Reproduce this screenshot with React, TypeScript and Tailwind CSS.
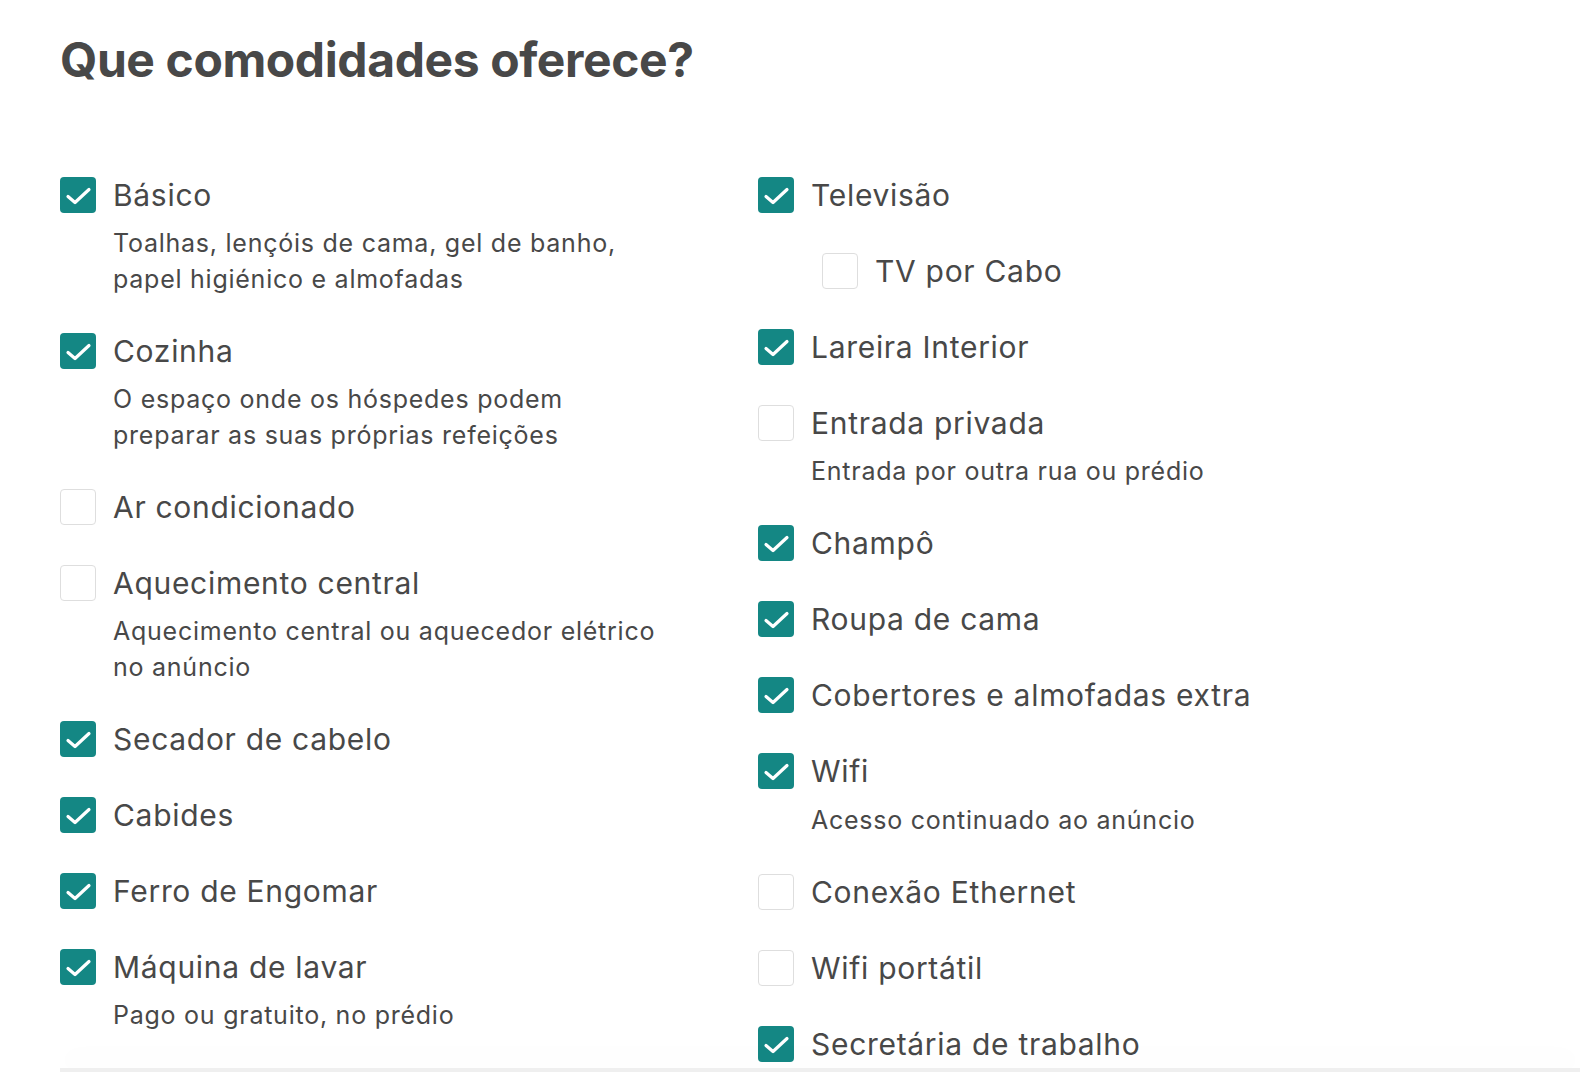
type Item = {
  label: string;
  checked: boolean;
  desc?: string[];
  nested?: boolean;
};

const left: Item[] = [
  { label: "Básico", checked: true, desc: ["Toalhas, lençóis de cama, gel de banho,", "papel higiénico e almofadas"] },
  { label: "Cozinha", checked: true, desc: ["O espaço onde os hóspedes podem", "preparar as suas próprias refeições"] },
  { label: "Ar condicionado", checked: false },
  { label: "Aquecimento central", checked: false, desc: ["Aquecimento central ou aquecedor elétrico", "no anúncio"] },
  { label: "Secador de cabelo", checked: true },
  { label: "Cabides", checked: true },
  { label: "Ferro de Engomar", checked: true },
  { label: "Máquina de lavar", checked: true, desc: ["Pago ou gratuito, no prédio"] },
];

const right: Item[] = [
  { label: "Televisão", checked: true },
  { label: "TV por Cabo", checked: false, nested: true },
  { label: "Lareira Interior", checked: true },
  { label: "Entrada privada", checked: false, desc: ["Entrada por outra rua ou prédio"] },
  { label: "Champô", checked: true },
  { label: "Roupa de cama", checked: true },
  { label: "Cobertores e almofadas extra", checked: true },
  { label: "Wifi", checked: true, desc: ["Acesso continuado ao anúncio"] },
  { label: "Conexão Ethernet", checked: false },
  { label: "Wifi portátil", checked: false },
  { label: "Secretária de trabalho", checked: true },
];

function Box({ checked }: { checked: boolean }) {
  if (checked) {
    return (
      <span className="flex h-[36px] w-[36px] shrink-0 items-center justify-center rounded-[4px] bg-[#148784]">
        <svg width="36" height="36" viewBox="0 0 36 36" fill="none">
          <path d="M8 19.5L15 25.5L29 12.5" stroke="white" strokeWidth="3.2" strokeLinecap="round" strokeLinejoin="round" />
        </svg>
      </span>
    );
  }
  return <span className="h-[36px] w-[36px] shrink-0 rounded-[4px] border border-[#dedede] bg-white" />;
}

function Row({ item }: { item: Item }) {
  return (
    <div className={`mb-[31px] ${item.nested ? "pl-[64px]" : ""}`}>
      <div className="flex h-[45px] items-center gap-[17px]">
        <Box checked={item.checked} />
        <span className="text-[30px] leading-none tracking-[0.7px]">{item.label}</span>
      </div>
      {item.desc && (
        <div className="mt-[9px] pl-[53px] text-[25px] leading-[35.5px] tracking-[0.75px]">
          {item.desc.map((l) => (
            <div key={l}>{l}</div>
          ))}
        </div>
      )}
    </div>
  );
}

export default function App() {
  return (
    <div
      className="relative h-[1072px] overflow-hidden bg-white text-[#484848]"
      style={{ fontFamily: "Inter, 'Noto Sans', sans-serif" }}
    >
      <div className="pl-[60px] pt-[28px]">
        <h1 className="text-[48px] font-bold leading-[64px] tracking-[-0.4px]">Que comodidades oferece?</h1>
        <div className="mt-[80px] grid grid-cols-[698px_1fr]">
          <div>
            {left.map((i) => (
              <Row key={i.label} item={i} />
            ))}
          </div>
          <div>
            {right.map((i) => (
              <Row key={i.label} item={i} />
            ))}
          </div>
        </div>
      </div>
      <div className="absolute bottom-0 left-[60px] right-0 h-[4px] bg-[#efefef] shadow-[0_-10px_28px_rgba(0,0,0,0.05)]" />
    </div>
  );
}
